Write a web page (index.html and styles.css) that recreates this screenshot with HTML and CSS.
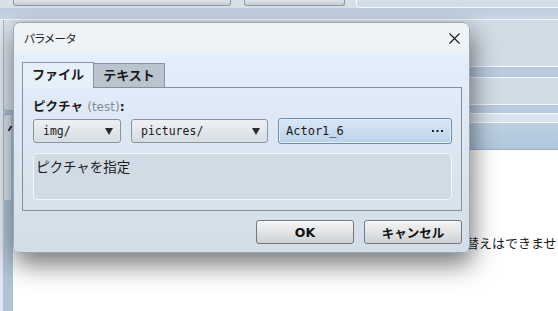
FILE: index.html
```html
<!DOCTYPE html>
<html lang="ja">
<head>
    <meta charset="UTF-8">
    <meta name="viewport" content="width=device-width, initial-scale=1.0">
    <title>パラメータ</title>
    <link rel="stylesheet" href="styles.css">
</head>
<body>
    <div class="app">
        <div class="toolbar">
            <div class="tool-btn tool-wide"></div>
            <div class="tool-btn tool-small"></div>
            <div class="tool-panel"></div>
        </div>
        <div class="toolbar-band"></div>
        <div class="workspace">
            <div class="side">
                <div class="side-card"></div>
                <div class="side-tab"><span class="side-mark"></span></div>
            </div>
            <div class="main">
                <div class="stripe plain-tall"></div>
                <div class="stripe band"></div>
                <div class="stripe plain-mid"></div>
                <div class="stripe band thin"></div>
                <div class="stripe pale"></div>
                <div class="stripe header"></div>
                <div class="content">
                    <p class="note">切り替えはできませ</p>
                </div>
            </div>
        </div>
    </div>

    <!-- modal dialog -->
    <div class="dialog">
        <div class="dialog-title">
            <span class="title-text">パラメータ</span>
            <svg class="close" width="11" height="11" viewBox="0 0 11 11">
                <path d="M0.5 0.5 L10.5 10.5 M10.5 0.5 L0.5 10.5" stroke="#1a1a1a" stroke-width="1.1" fill="none"/>
            </svg>
        </div>
        <div class="dialog-body">
            <div class="tabs">
                <div class="tab active">ファイル</div>
                <div class="tab">テキスト</div>
            </div>
            <div class="tab-pane">
                <div class="field-label">ピクチャ <span class="hint">(test)</span>:</div>
                <div class="picker">
                    <div class="select select-img">
                        <span>img/</span>
                        <svg width="8" height="7" viewBox="0 0 8 7"><path d="M0 0 H8 L4 7 Z" fill="#2a2a2a"/></svg>
                    </div>
                    <div class="select select-pic">
                        <span>pictures/</span>
                        <svg width="8" height="7" viewBox="0 0 8 7"><path d="M0 0 H8 L4 7 Z" fill="#2a2a2a"/></svg>
                    </div>
                    <div class="file-box">
                        <span>Actor1_6</span>
                        <svg class="dots" width="11" height="2" viewBox="0 0 11 2">
                            <rect x="0" y="0" width="2" height="2" fill="#222"/>
                            <rect x="4.5" y="0" width="2" height="2" fill="#222"/>
                            <rect x="9" y="0" width="2" height="2" fill="#222"/>
                        </svg>
                    </div>
                </div>
                <div class="desc">ピクチャを指定</div>
            </div>
            <div class="actions">
                <button type="button" class="btn">OK</button>
                <button type="button" class="btn">キャンセル</button>
            </div>
        </div>
    </div>
</body>
</html>
```

FILE: styles.css
```css
body {
    margin: 0;
    width: 558px;
    height: 311px;
    overflow: hidden;
    font-family: "DejaVu Sans", "Noto Sans CJK JP", sans-serif;
    background-color: #d2dce6;
    color: #1a1a1a;
}
.app {
    display: flex;
    flex-direction: column;
    height: 311px;
}
/* top toolbar, mostly scrolled away */
.toolbar {
    display: flex;
    height: 8px;
    background-color: #d8e0e8;
}
.tool-btn {
    height: 5px;
    border: 1px solid #8c98a4;
    border-top: none;
    border-radius: 0 0 3px 3px;
    background: linear-gradient(#dfe3e7, #c8ced4);
}
.tool-wide {
    margin-left: 13px;
    width: 216px;
}
.tool-small {
    margin-left: 13px;
    width: 99px;
}
.tool-panel {
    margin-left: 11px;
    flex: 1;
    height: 7px;
    background-color: #d3dde7;
    border-left: 1px solid #f4f8fc;
    border-bottom: 1px solid #f4f8fc;
    border-bottom-left-radius: 4px;
}
.toolbar-band {
    height: 11px;
    background: linear-gradient(#bccee1, #c9d6e4);
    border-bottom: 1px solid #f0f4f8;
}
.workspace {
    display: flex;
    flex: 1;
}
.side {
    width: 13px;
    background: linear-gradient(to right, #e2e8ee 0, #e2e8ee 3px, #b0c4d8 3px);
}
.side-card {
    margin-left: 3px;
    height: 90px;
    background-color: #d8e1ea;
    border-left: 1px solid #a3b3c4;
    border-bottom: 1px solid #a3b3c4;
    border-bottom-left-radius: 4px;
}
.side-tab {
    margin: 3px 0 0 3px;
    width: 7px;
    height: 85px;
    background-color: #d8e1ea;
    border-left: 1px solid #a3b3c4;
    border-top: 1px solid #a3b3c4;
    border-top-left-radius: 4px;
}
.side-mark {
    display: block;
    margin: 11px 0 0 5px;
    width: 2px;
    height: 5px;
    background-color: #222;
    transform: skewX(-30deg);
}
.main {
    flex: 1;
    display: flex;
    flex-direction: column;
}
.stripe.plain-tall {
    height: 46px;
}
.stripe.band {
    height: 10px;
    background-color: #b8cbdf;
    border-top: 1px solid #f4f8fc;
    border-bottom: 1px solid #f4f8fc;
}
.stripe.band.thin {
    height: 8px;
}
.stripe.plain-mid {
    height: 26px;
}
.stripe.pale {
    height: 8px;
    background-color: #dce5ef;
}
.stripe.header {
    height: 26px;
    border-top: 1px solid #f4f8fc;
    border-bottom: 1px solid #9fb3c7;
    background: linear-gradient(#bcd0e3, #b2c7dc);
}
.content {
    flex: 1;
    background-color: #ffffff;
}
.note {
    margin: 84px 0 0 427px;
    font-family: "Noto Sans CJK JP", sans-serif;
    font-size: 13px;
    line-height: 18px;
    white-space: nowrap;
}
/* dialog */
.dialog {
    position: absolute;
    left: 13px;
    top: 22px;
    width: 457px;
    height: 231px;
    box-sizing: border-box;
    border: 1px solid #9aa6b2;
    border-radius: 7px;
    overflow: hidden;
    box-shadow: 2px 11px 26px rgba(0, 0, 0, 0.55);
    display: flex;
    flex-direction: column;
}
.dialog-title {
    height: 30px;
    padding: 0 9px 0 10px;
    display: flex;
    align-items: center;
    justify-content: space-between;
    background-color: #eef3f8;
}
.title-text {
    font-family: "Noto Sans CJK JP", sans-serif;
    font-feature-settings: "palt";
    font-size: 11.5px;
    color: #222;
}
.dialog-body {
    flex: 1;
    padding: 9px 7px 8px 8px;
    background: linear-gradient(#e4effb, #d2dde8);
}
.tabs {
    display: flex;
    align-items: flex-start;
    height: 25px;
}
.tab {
    width: 72px;
    height: 24px;
    margin-top: 1px;
    margin-left: -1px;
    box-sizing: border-box;
    border: 1px solid #8a949e;
    border-bottom: none;
    background-color: #b9c4cf;
    font-family: "Noto Sans CJK JP", sans-serif;
    font-size: 13px;
    font-weight: 700;
    line-height: 22px;
    text-align: center;
    color: #1a1a1a;
}
.tab.active {
    position: relative;
    z-index: 1;
    height: 26px;
    margin-top: 0;
    margin-left: 0;
    background-color: #e6f0fb;
}
.tab-pane {
    height: 124px;
    box-sizing: border-box;
    border: 1px solid #858f99;
    padding: 11px 9px 10px 10px;
}
.field-label {
    height: 16px;
    font-size: 12.5px;
    line-height: 16px;
    font-weight: 700;
}
.field-label .hint {
    font-size: 12px;
    font-weight: 400;
    color: #7f8d9c;
}
.picker {
    display: flex;
    align-items: center;
    gap: 10px;
    height: 26px;
    margin-top: 3px;
}
.select {
    height: 24px;
    box-sizing: border-box;
    border: 1px solid #8b939c;
    border-radius: 3px;
    background: linear-gradient(#eef1f4, #d6dce2);
    display: flex;
    align-items: center;
    justify-content: space-between;
    padding: 0 7px 0 9px;
    font-family: "DejaVu Sans Mono", monospace;
    font-size: 11.5px;
}
.select-img {
    width: 88px;
}
.select-pic {
    width: 137px;
}
.file-box {
    flex: 1;
    height: 26px;
    box-sizing: border-box;
    border: 1px solid #6b8eb2;
    border-radius: 3px;
    box-shadow: inset 0 0 0 1px #e4eef8;
    background: linear-gradient(#d8e7f6, #bcd2e9);
    display: flex;
    align-items: center;
    justify-content: space-between;
    padding: 0 8px 0 7px;
    font-family: "DejaVu Sans Mono", monospace;
    font-size: 12px;
}
.desc {
    margin-top: 9px;
    height: 47px;
    box-sizing: border-box;
    border: 1px solid #f2f6fa;
    border-radius: 4px;
    background-color: #d0dbe6;
    padding: 3px 2px;
    font-family: "Noto Sans CJK JP", sans-serif;
    font-size: 13.5px;
    line-height: 18px;
}
.actions {
    display: flex;
    justify-content: flex-end;
    gap: 10px;
    margin-top: 9px;
}
.btn {
    width: 98px;
    height: 24px;
    border: 1px solid #707880;
    border-radius: 3px;
    background: linear-gradient(#f4f4f4, #e2e4e6 50%, #cdd1d5);
    box-shadow: inset 0 1px 0 #ffffff;
    font-family: "DejaVu Sans", "Noto Sans CJK JP", sans-serif;
    font-size: 12.5px;
    font-weight: 700;
    color: #111;
    padding: 0;
    cursor: pointer;
}
.btn:hover {
    background: linear-gradient(#f8fbff, #dbe8f5);
}
```
